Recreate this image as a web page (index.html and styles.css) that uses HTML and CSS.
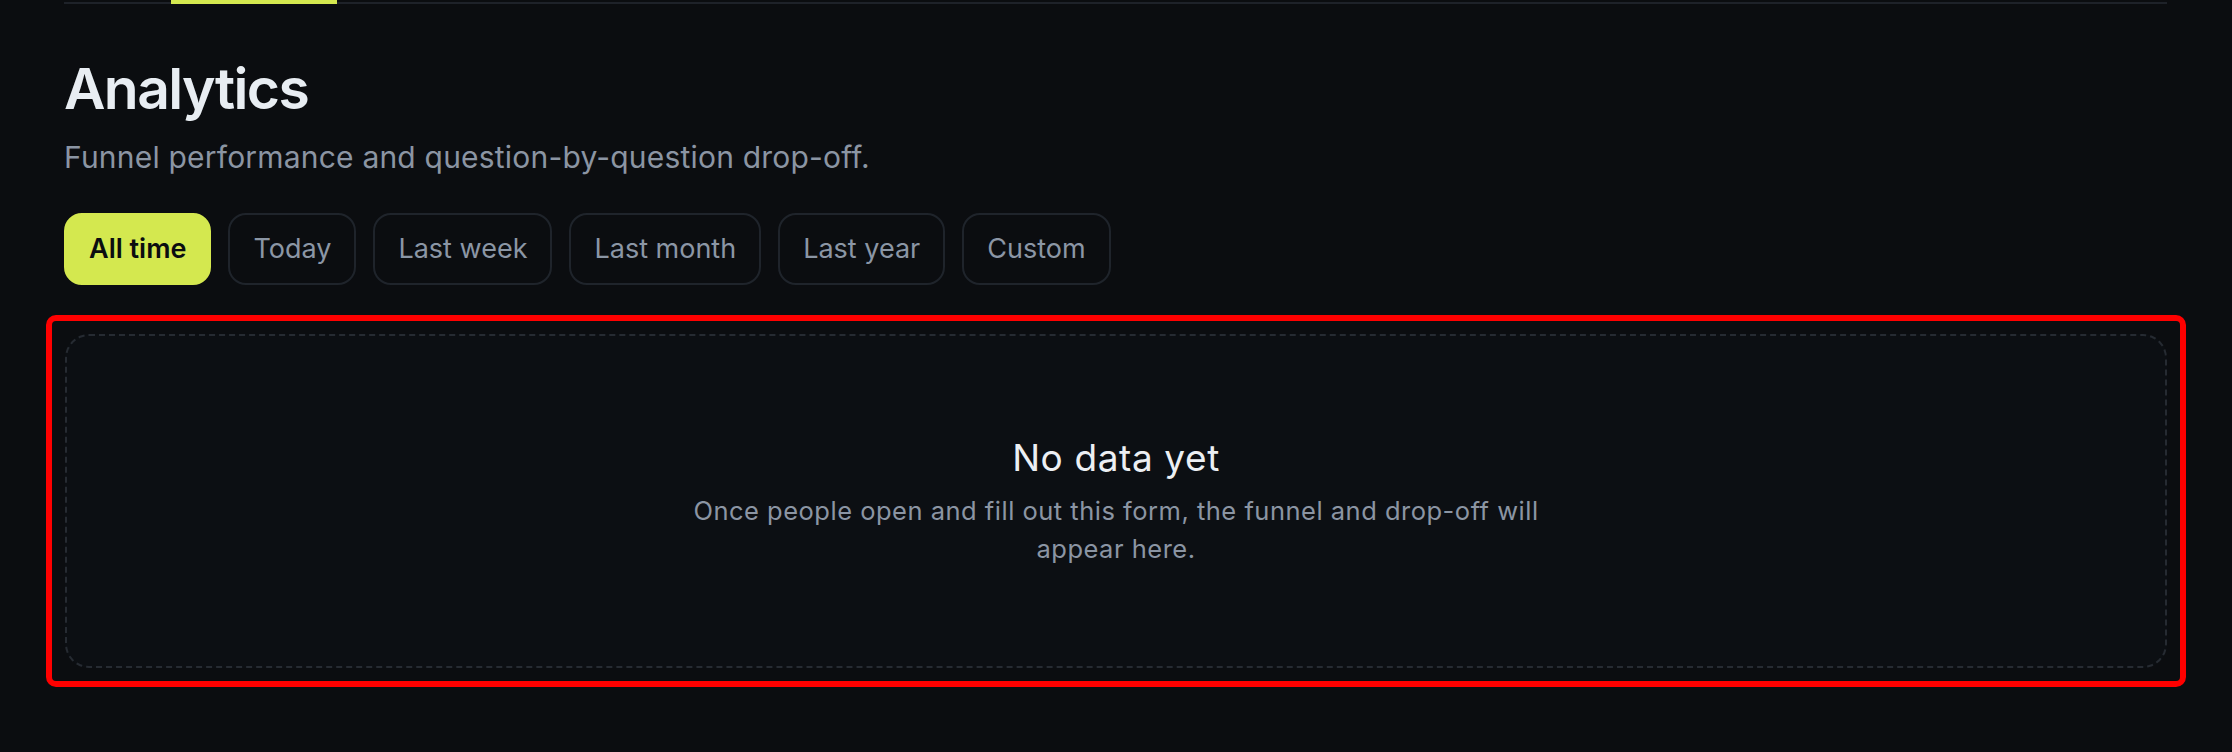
FILE: index.html
```html
<!DOCTYPE html>
<html lang="en">
<head>
<meta charset="utf-8">
<title>Analytics</title>
<link rel="stylesheet" href="styles.css">
</head>
<body>
<main class="page">
  <div class="tabbar"><span class="tab-active"></span></div>
  <h1 class="title">Analytics</h1>
  <p class="subtitle">Funnel performance and question-by-question drop-off.</p>
  <div class="ranges">
    <button class="pill pill-active">All time</button>
    <button class="pill">Today</button>
    <button class="pill">Last week</button>
    <button class="pill">Last month</button>
    <button class="pill">Last year</button>
    <button class="pill">Custom</button>
  </div>
  <div class="highlight">
    <section class="empty">
      <h2 class="empty-title">No data yet</h2>
      <p class="empty-text">Once people open and fill out this form, the funnel and drop-off will appear here.</p>
    </section>
  </div>
</main>
</body>
</html>
```
FILE: styles.css
```css
html, body {
  margin: 0;
  padding: 0;
  background: #0b0d10;
}
body {
  font-family: Inter, "Liberation Sans", sans-serif;
  color: #e8ecf1;
}
.page {
  padding: 0 65px 0 64px;
}
.tabbar {
  display: flex;
  height: 2px;
  margin-top: 2px;
  background: #1e2229;
}
.tab-active {
  display: block;
  margin-left: 107px;
  margin-top: -2px;
  width: 166px;
  height: 4px;
  background: #d4e84f;
}
.title {
  margin: 49px 0 0;
  font-size: 57px;
  line-height: 72px;
  font-weight: 600;
  letter-spacing: -1.6px;
  color: #e8edf2;
}
.subtitle {
  margin: 14px 0 0;
  font-size: 30px;
  line-height: 36px;
  font-weight: 400;
  letter-spacing: 0.2px;
  color: #8b95a3;
}
.ranges {
  display: flex;
  gap: 17px;
  margin-top: 38px;
}
.pill {
  height: 72px;
  padding: 0 23px;
  border: 2px solid #1f242b;
  border-radius: 18px;
  background: #0b0d10;
  color: #8b96a5;
  font-family: Inter, "Liberation Sans", sans-serif;
  font-size: 27px;
  font-weight: 400;
  line-height: 68px;
  cursor: pointer;
}
.pill-active {
  background: #d4e84f;
  border-color: #d4e84f;
  color: #0b0d10;
  font-weight: 600;
}
.highlight {
  margin: 30px -19px 0 -18px;
  padding: 13px;
  border: 6px solid #ff0000;
  border-radius: 10px;
}
.empty {
  padding: 100px 24px 97px;
  border: 2px dashed #262b32;
  border-radius: 24px;
  background: #0c0f13;
  text-align: center;
}
.empty-title {
  margin: 0;
  font-size: 37px;
  line-height: 44px;
  font-weight: 400;
  letter-spacing: 0.6px;
  color: #eceff3;
}
.empty-text {
  max-width: 864px;
  margin: 12px auto 0;
  font-size: 25.5px;
  line-height: 38.4px;
  letter-spacing: 0.5px;
  color: #8b95a3;
}
```
